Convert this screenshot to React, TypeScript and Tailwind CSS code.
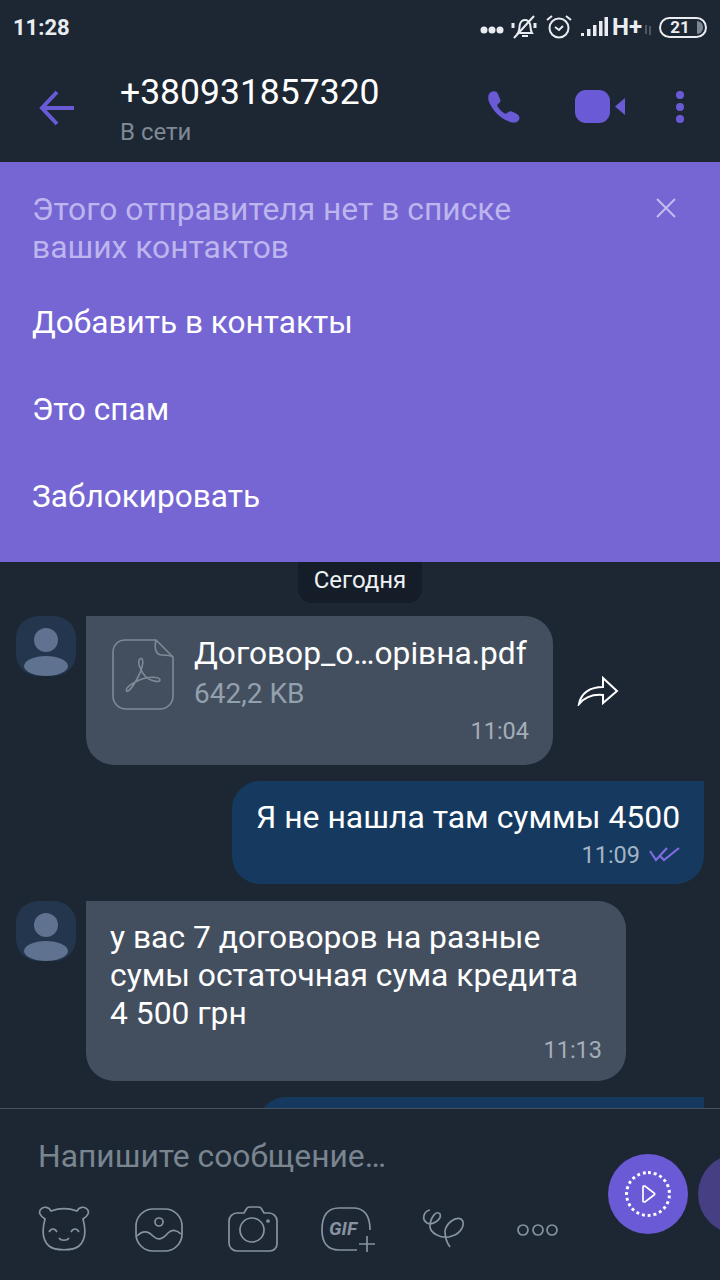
const font = { fontFamily: "Roboto, 'Noto Sans', sans-serif" };

const StatusIcons = () => (
  <div className="flex items-center text-[#e9edf1]">
    <svg width="24" height="8" viewBox="0 0 24 8" className="mt-[5px]" fill="currentColor">
      <circle cx="4" cy="4" r="3.5" /><circle cx="12" cy="4" r="3.5" /><circle cx="20" cy="4" r="3.5" />
    </svg>
    <svg width="28" height="26" viewBox="0 0 28 26" className="ml-[6px]" fill="none" stroke="currentColor" strokeWidth="2">
      <path d="M8 19c2-3 1-6 2-9 1-3 3-4 5-4s4 1 5 4c1 3 0 6 2 9H8Z" />
      <path d="M12 22h6M4 24 24 2" />
      <path d="M3 9v5M25 9v5" strokeWidth="3" />
    </svg>
    <svg width="28" height="28" viewBox="0 0 28 28" className="ml-[7px]" fill="none" stroke="currentColor" strokeWidth="2">
      <circle cx="14" cy="15" r="9.5" />
      <path d="M10 14l4 3 4-4M2 7l5-4M26 7l-5-4" />
    </svg>
    <svg width="28" height="20" viewBox="0 0 28 20" className="ml-[7px]" fill="currentColor">
      <rect x="1" y="16" width="3" height="3" /><rect x="7" y="12" width="3.5" height="7" /><rect x="13" y="8" width="3.5" height="11" /><rect x="19" y="4" width="3.5" height="15" /><rect x="24.5" y="0" width="3.5" height="19" />
    </svg>
    <span className="ml-[4px] text-[24px] font-bold leading-none" style={font}>H+</span>
    <svg width="8" height="10" viewBox="0 0 8 10" className="ml-[2px] mt-[6px]" stroke="#7d8792" fill="none">
      <path d="M2 0v9M6 1v9" />
    </svg>
    <div className="ml-[7px] w-[48px] h-[21px] rounded-full border-2 border-[#e9edf1] flex items-center justify-center relative">
      <span className="text-[17px] font-bold leading-none ml-[-6px]" style={font}>21</span>
      <span className="absolute right-[2px] top-[2px] w-[6px] h-[13px] rounded-r-full bg-[#7d8792]" />
    </div>
  </div>
);

const Header = () => (
  <div className="h-[108px] flex items-start">
    <svg width="38" height="36" viewBox="0 0 38 36" className="ml-[38px] mt-[36px]" fill="none" stroke="#6a5ad6" strokeWidth="4">
      <path d="M36 18H5M19 2 4 18l15 16" />
    </svg>
    <div className="ml-[44px] mt-[16px]">
      <div className="text-[35.5px] leading-[44px] text-white" style={font}>+380931857320</div>
      <div className="text-[24px] leading-[26px] text-[#7e8994] mt-[5px]" style={font}>В сети</div>
    </div>
    <div className="ml-auto mt-[36px] mr-[35px] flex items-center">
      <svg width="33" height="33" viewBox="0 0 33 33" fill="#6a5ad6">
        <path d="M2 4c2-3 7-4 9 0l2 5c1 2 0 4-2 5-1 1-1 2 0 3 2 3 4 5 6 6 1 1 2 1 3 0 2-2 4-2 6-1l4 2c3 2 3 5 1 7-2 2-6 2-10 0C13 28 6 21 2 12 1 9 1 6 2 4Z" />
      </svg>
      <svg width="50" height="33" viewBox="0 0 50 33" className="ml-[55px]" fill="#6a5ad6">
        <rect x="0" y="0" width="35" height="33" rx="11" />
        <path d="M50 8v17L40 16.5Z" />
      </svg>
      <svg width="10" height="32" viewBox="0 0 10 32" className="ml-[50px]" fill="#6a5ad6">
        <circle cx="5" cy="4" r="4" /><circle cx="5" cy="16" r="4" /><circle cx="5" cy="28" r="4" />
      </svg>
    </div>
  </div>
);

const Banner = () => (
  <div className="h-[400px] bg-[#7566d4] relative pl-[32px] pt-[28px]" style={font}>
    <div className="text-[31.8px] leading-[38px] text-[#bdb5ee]">
      Этого отправителя нет в списке<br />ваших контактов
    </div>
    <svg width="22" height="22" viewBox="0 0 22 22" className="absolute right-[43px] top-[35px]" stroke="#c3bcf0" strokeWidth="2">
      <path d="M2 2l18 18M20 2 2 20" />
    </svg>
    <div className="mt-[13px] text-[31.6px] text-white">
      <div className="h-[87px] flex items-center">Добавить в контакты</div>
      <div className="h-[87px] flex items-center">Это спам</div>
      <div className="h-[87px] flex items-center">Заблокировать</div>
    </div>
  </div>
);

const Avatar = () => (
  <div className="w-[60px] h-[60px] rounded-[22px] bg-[#24364d] flex flex-col items-center shrink-0 pt-[12px]">
    <div className="w-[24px] h-[24px] rounded-full bg-[#5f7290]" />
    <div className="w-[44px] h-[20px] rounded-[50%] bg-[#5f7290] mt-[4px]" />
  </div>
);

const Messages = () => (
  <div className="flex-1 overflow-hidden relative pt-[54px]" style={font}>
    <div className="absolute top-0 left-[298px] w-[124px] h-[41px] bg-[#151d28] rounded-b-[14px] flex items-center justify-center pb-[6px] text-[24px] text-[#eef1f3]">
      Сегодня
    </div>

    <div className="flex items-start pl-[16px]">
      <Avatar />
      <div className="ml-[10px] w-[467px] h-[149px] bg-[#434f5f] rounded-r-[28px] rounded-bl-[28px] relative">
        <svg width="62" height="71" viewBox="0 0 62 71" className="absolute left-[26px] top-[23px]" fill="none" stroke="#7f8a96" strokeWidth="1.6">
          <path d="M13 1h31l17 17v39a13 13 0 0 1-13 13H14A13 13 0 0 1 1 57V13A12 12 0 0 1 13 1Z" />
          <path d="M44 1c-2 9 0 15 6 15 4 0 8 0 11 2" />
          <path d="M16 52C20 50 28 36 30 28 32 22 30 18 28 20 25 22 28 32 34 38 38 42 48 44 48 41 48 38 38 37 30 40 24 42 18 46 15 49 14 51 14 53 16 52Z" />
        </svg>
        <div className="absolute left-[108px] top-[18px] text-[31.7px] leading-[40px] text-white">Договор_о…орівна.pdf</div>
        <div className="absolute left-[108px] top-[63px] text-[28px] leading-[30px] text-[#93a0ad]">642,2 KB</div>
        <div className="absolute right-[24px] top-[100px] text-[23.5px] leading-[30px] text-[#a3adb8]">11:04</div>
      </div>
      <svg width="42" height="30" viewBox="0 0 42 30" className="ml-[24px] mt-[60px]" fill="none" stroke="#ffffff" strokeWidth="2">
        <path d="M2 28C4 17 13 11 26 11V2l14 13-14 12v-8C16 18 8 21 2 28Z" />
      </svg>
    </div>

    <div className="flex justify-end pr-[16px] mt-[16px]">
      <div className="w-[472px] h-[103px] bg-[#163a5f] rounded-l-[28px] rounded-br-[28px] relative">
        <div className="absolute left-[24px] top-[16px] text-[31.9px] leading-[40px] text-white">Я не нашла там суммы 4500</div>
        <div className="absolute right-[64px] top-[59px] text-[23.5px] leading-[30px] text-[#a3b3c4]">11:09</div>
        <svg width="32" height="18" viewBox="0 0 32 18" className="absolute right-[23px] top-[65px]" fill="none" stroke="#7f6ce0" strokeWidth="2.2">
          <path d="M1 5l6 9L18 2M10 9l5 5L30 2" />
        </svg>
      </div>
    </div>

    <div className="flex items-start pl-[16px] mt-[17px]">
      <Avatar />
      <div className="ml-[10px] w-[540px] h-[180px] bg-[#434f5f] rounded-r-[28px] rounded-bl-[28px] relative">
        <div className="absolute left-[24px] top-[17px] text-[31.8px] leading-[38px] text-white">
          у вас 7 договоров на разные<br />сумы остаточная сума кредита<br />4 500 грн
        </div>
        <div className="absolute right-[24px] top-[134px] text-[23.5px] leading-[30px] text-[#a3adb8]">11:13</div>
      </div>
    </div>

    <div className="flex justify-end pr-[16px] mt-[16px]">
      <div className="w-[446px] h-[60px] bg-[#163a5f] rounded-l-[28px]" />
    </div>
  </div>
);

const Composer = () => (
  <div className="h-[172px] border-t border-[#465260] relative pl-[38px]" style={font}>
    <div className="mt-[27px] text-[31.8px] leading-[40px] text-[#79858f]">Напишите сообщение…</div>
    <div className="mt-[30px] flex items-start text-[#8793a0]">
      <svg width="52" height="46" viewBox="0 0 52 46" fill="none" stroke="currentColor" strokeWidth="1.7">
        <path d="M7 13C2 10 0 6 3 3c3-3 8-2 10 2 8-3 18-3 26 0 2-4 7-5 10-2 3 3 1 7-4 10 3 11 3 21-4 27-6 5-24 5-30 0C4 34 4 24 7 13Z" />
        <path d="M11 26c2-4 6-4 8 0M33 26c2-4 6-4 8 0M21 32c2 3 8 3 10 0" />
      </svg>
      <svg width="48" height="44" viewBox="0 0 48 44" className="ml-[45px] mt-[2px]" fill="none" stroke="currentColor" strokeWidth="1.7">
        <rect x="1" y="1" width="46" height="42" rx="17" />
        <circle cx="24" cy="14" r="4" />
        <path d="M2 28c6-6 11-5 16 0s10 3 15-3c4-4 9-3 13 1" />
      </svg>
      <svg width="50" height="46" viewBox="0 0 50 46" className="ml-[45px]" fill="none" stroke="currentColor" strokeWidth="1.7">
        <path d="M9 7h7l3-5c1-1 2-1 3-1h8c1 0 2 0 3 1l3 5h5a8 8 0 0 1 8 8v23a7 7 0 0 1-7 7H9a8 8 0 0 1-8-8V15a8 8 0 0 1 8-8Z" />
        <circle cx="24" cy="24" r="12" />
        <circle cx="40" cy="15" r="1" fill="currentColor" />
      </svg>
      <div className="ml-[43px] relative w-[50px] h-[46px]">
        <svg width="52" height="48" viewBox="0 0 52 48" fill="none" stroke="currentColor" strokeWidth="1.7" className="absolute left-0 top-0">
          <path d="M36 44H18C6 44 1 36 1 24 1 10 6 2 18 2h14c12 0 17 8 17 22" />
        </svg>
        <span className="absolute left-[8px] top-[11px] text-[19px] leading-[24px] font-bold italic">GIF</span>
        <svg width="18" height="18" viewBox="0 0 18 18" className="absolute left-[37px] top-[29px]" stroke="currentColor" strokeWidth="1.7">
          <path d="M9 1v16M1 9h16" />
        </svg>
      </div>
      <svg width="46" height="42" viewBox="20 12 46 42" className="ml-[49px] mt-[1px]" fill="none" stroke="currentColor" strokeWidth="1.7">
        <path d="M30 15C24 16 21 24 27 28 33 31 42 24 40 19 37 15 31 21 30 30 29 38 42 45 52 41 62 38 66 28 61 24 55 21 46 29 45 36 45 43 47 48 50 52" />
      </svg>
      <svg width="43" height="16" viewBox="0 0 43 16" className="ml-[50px] mt-[16px]" fill="none" stroke="currentColor" strokeWidth="1.7">
        <circle cx="7" cy="8" r="5" /><circle cx="22" cy="8" r="5" /><circle cx="36" cy="8" r="5" />
      </svg>
    </div>
    <div className="absolute left-[608px] top-[45px] w-[80px] h-[80px] rounded-full bg-[#6a5ad6] flex items-center justify-center">
      <div className="w-[46px] h-[46px] rounded-full border-[3px] border-dotted border-white flex items-center justify-center">
        <svg width="14" height="18" viewBox="0 0 14 18" fill="none" stroke="#ffffff" strokeWidth="1.7" className="ml-[2px]">
          <path d="M1 2c0-1 1-1 2-1l9 7c1 .6 1 1.4 0 2l-9 7c-1 0-2 0-2-1Z" />
        </svg>
      </div>
    </div>
    <div className="absolute left-[698px] top-[45px] w-[80px] h-[80px] rounded-full bg-[#473f84]" />
  </div>
);

export default function App() {
  return (
    <div className="w-[720px] h-[1280px] bg-[#1d2734] flex flex-col overflow-hidden">
      <div className="h-[54px] flex items-center justify-between pl-[13px] pr-[13px]">
        <span className="text-[22px] font-bold text-[#e9edf1]" style={font}>11:28</span>
        <StatusIcons />
      </div>
      <Header />
      <Banner />
      <Messages />
      <Composer />
    </div>
  );
}
